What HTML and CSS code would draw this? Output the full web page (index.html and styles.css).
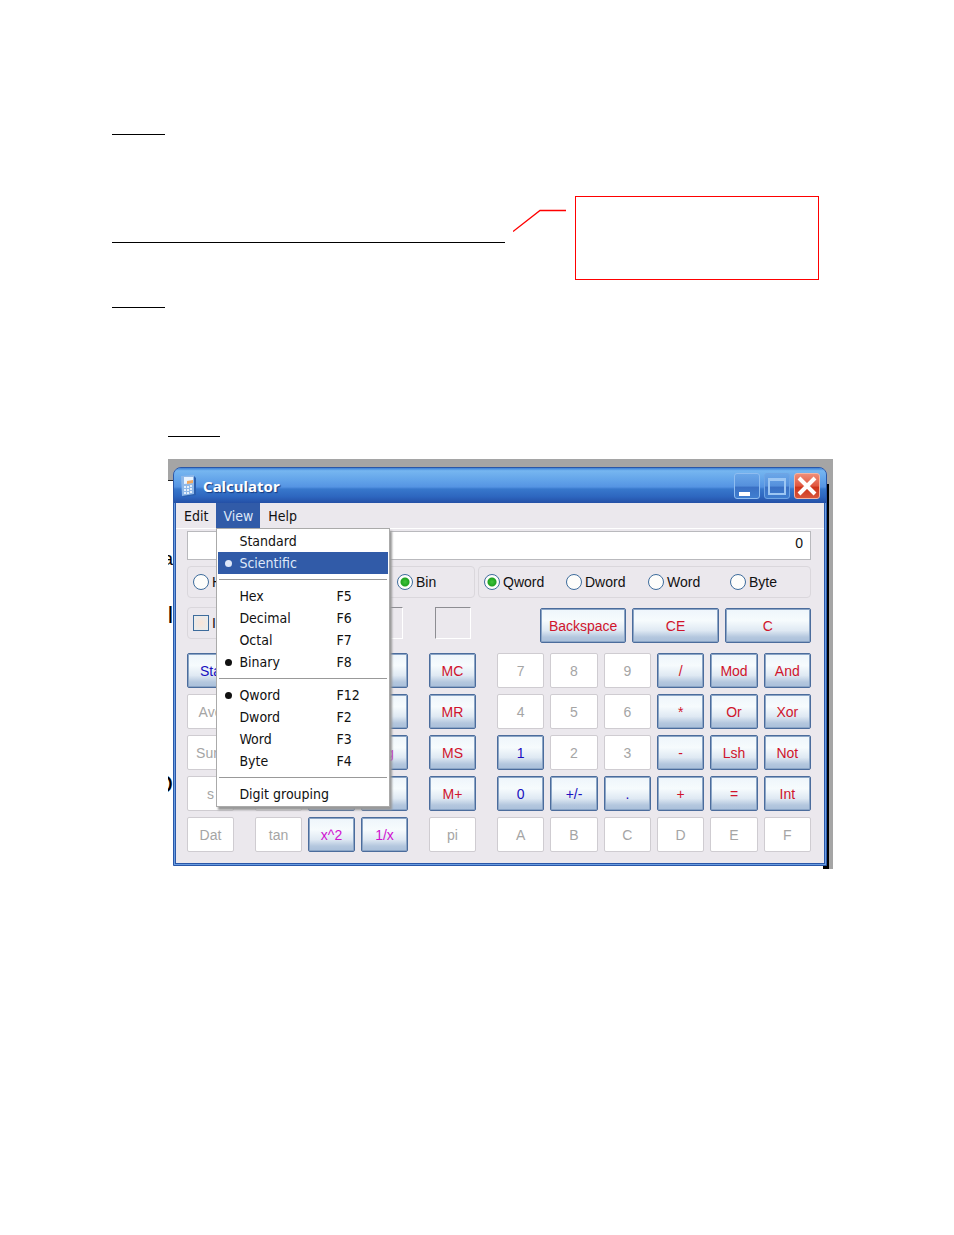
FILE: index.html
```html
<!DOCTYPE html>
<html lang="en">
<head>
<meta charset="utf-8">
<title>Calculator</title>
<meta name="viewport" content="width=device-width, initial-scale=1.0">
<link rel="stylesheet" href="styles.css">
</head>
<body>

<main class="page">
  <hr class="rule">

  <div class="note-row">
    <hr class="note-rule">
    <svg class="leader" width="54" height="24" viewBox="0 0 54 24">
      <path d="M0 22.500 L27 1.500 H53" fill="none" stroke="#f00" stroke-width="1.300"/>
    </svg>
    <div class="callout"></div>
  </div>

  <hr class="rule second">
  <hr class="rule third">

  <div class="desktop">
    <div class="behind">
      <span class="frag-a">a</span>
      <span class="frag-l">l</span>
      <span class="frag-d">D</span>
    </div>

    <div class="window">
      <div class="titlebar">
        <svg class="app-icon" width="18" height="22" viewBox="0 0 18 22">
          <path d="M1 1 H13 L15 3 V20 L3 22 L1 20Z" fill="#2b5fae"/>
          <path d="M0 1 L13 0 V19 L1 21Z" fill="#8fb8e8"/>
          <path d="M3 2 L12 2 V8 L3 9Z" fill="#e8f3ff"/>
          <path d="M6 6 L12 5 V8 L6 9Z" fill="#f0a860"/>
          <path d="M3 11h2v2H3zM6 11h2v2H6zM9 10h2v2H9zM3 14h2v2H3zM6 14h2v2H6zM9 13h2v2H9zM3 17h2v2H3zM6 17h2v2H6zM9 16h2v2H9z" fill="#e4effb"/>
        </svg>
        <span class="title">Calculator</span>
        <button class="win-btn" aria-label="Minimize">
          <svg width="26" height="26" viewBox="0 0 26 26"><path d="M5 19h11v4H5z" fill="#fff"/></svg>
        </button>
        <button class="win-btn faded" aria-label="Maximize">
          <svg width="26" height="26" viewBox="0 0 26 26"><path d="M5 6H21V21H5Z" fill="none" stroke="#9cc6f3" stroke-width="2"/><path d="M4 6.500H22" stroke="#9cc6f3" stroke-width="3"/></svg>
        </button>
        <button class="win-btn close" aria-label="Close">
          <svg width="26" height="26" viewBox="0 0 26 26"><path d="M5 5 L21 21 M21 5 L5 21" stroke="#fff" stroke-width="4"/></svg>
        </button>
      </div>

      <div class="client">
        <div class="menubar">
          <button class="menu-btn">Edit</button>
          <div class="menu-wrap">
            <button class="menu-btn open">View</button>
            <div class="menu">
              <button class="item"><span>Standard</span></button>
              <button class="item dot selected"><span>Scientific</span></button>
              <hr class="sep">
              <button class="item"><span>Hex</span><span>F5</span></button>
              <button class="item"><span>Decimal</span><span>F6</span></button>
              <button class="item"><span>Octal</span><span>F7</span></button>
              <button class="item dot"><span>Binary</span><span>F8</span></button>
              <hr class="sep">
              <button class="item dot"><span>Qword</span><span>F12</span></button>
              <button class="item"><span>Dword</span><span>F2</span></button>
              <button class="item"><span>Word</span><span>F3</span></button>
              <button class="item"><span>Byte</span><span>F4</span></button>
              <hr class="sep">
              <button class="item"><span>Digit grouping</span></button>
            </div>
          </div>
          <button class="menu-btn">Help</button>
        </div>

        <div class="content">
          <input class="display" type="text" value="0" aria-label="Display" readonly>

          <div class="options">
            <div class="group base">
              <label><input type="radio" name="base">Hex</label>
              <label><input type="radio" name="base" aria-label="Dec"></label>
              <label><input type="radio" name="base" aria-label="Oct"></label>
              <label><input type="radio" name="base" checked>Bin</label>
            </div>
            <div class="group size">
              <label><input type="radio" name="size" checked>Qword</label>
              <label><input type="radio" name="size">Dword</label>
              <label><input type="radio" name="size">Word</label>
              <label><input type="radio" name="size">Byte</label>
            </div>
          </div>

          <div class="tools">
            <div class="group flags">
              <label><input type="checkbox">Inv</label>
              <label><input type="checkbox" aria-label="Hyp"></label>
            </div>
            <div class="indicator"></div>
            <div class="indicator"></div>
            <div class="clear">
              <button class="key red">Backspace</button>
              <button class="key red">CE</button>
              <button class="key red">C</button>
            </div>
          </div>

          <div class="keypad">
            <div class="keys">
              <button class="key blue">Sta</button>
              <button class="key" disabled>Ave</button>
              <button class="key" disabled>Sum</button>
              <button class="key" disabled>s</button>
              <button class="key" disabled>Dat</button>
            </div>
            <div class="keys three">
              <button class="key" aria-label="F-E" disabled></button>
              <button class="key pink" aria-label="("></button>
              <button class="key pink" aria-label=")"></button>
              <button class="key" aria-label="dms" disabled></button>
              <button class="key pink" aria-label="Exp"></button>
              <button class="key pink" aria-label="ln"></button>
              <button class="key" aria-label="sin" disabled></button>
              <button class="key pink" aria-label="x^y"></button>
              <button class="key pink">log</button>
              <button class="key" aria-label="cos" disabled></button>
              <button class="key pink" aria-label="x^3"></button>
              <button class="key pink" aria-label="n!"></button>
              <button class="key" disabled>tan</button>
              <button class="key pink">x^2</button>
              <button class="key pink">1/x</button>
            </div>
            <div class="keys">
              <button class="key red">MC</button>
              <button class="key red">MR</button>
              <button class="key red">MS</button>
              <button class="key red">M+</button>
              <button class="key" disabled>pi</button>
            </div>
            <div class="keys six">
              <button class="key" disabled>7</button>
              <button class="key" disabled>8</button>
              <button class="key" disabled>9</button>
              <button class="key red">/</button>
              <button class="key red">Mod</button>
              <button class="key red">And</button>
              <button class="key" disabled>4</button>
              <button class="key" disabled>5</button>
              <button class="key" disabled>6</button>
              <button class="key red">*</button>
              <button class="key red">Or</button>
              <button class="key red">Xor</button>
              <button class="key blue">1</button>
              <button class="key" disabled>2</button>
              <button class="key" disabled>3</button>
              <button class="key red">-</button>
              <button class="key red">Lsh</button>
              <button class="key red">Not</button>
              <button class="key blue">0</button>
              <button class="key blue">+/-</button>
              <button class="key blue">.</button>
              <button class="key red">+</button>
              <button class="key red">=</button>
              <button class="key red">Int</button>
              <button class="key" disabled>A</button>
              <button class="key" disabled>B</button>
              <button class="key" disabled>C</button>
              <button class="key" disabled>D</button>
              <button class="key" disabled>E</button>
              <button class="key" disabled>F</button>
            </div>
          </div>
        </div>
      </div>
    </div>
  </div>
</main>

</body>
</html>
```
FILE: styles.css
```css
* {
  box-sizing: border-box;
}
body {
  margin: 0;
  background: #fff;
  color: #111;
  font-family: "Liberation Sans", Arial, sans-serif;
  font-size: 14px;
}
button, input {
  font: inherit;
  color: inherit;
  margin: 0;
}
hr {
  margin: 0;
  border: 0;
}

/* document */
.page {
  padding: 134px 121px 0 112px;
}
.rule {
  width: 53px;
  height: 1px;
  background: #000;
}
.second {
  margin-top: 27px;
}
.third {
  width: 52px;
  margin: 128px 0 22px 56px;
}
.note-row {
  display: flex;
  gap: 8px;
  margin-top: 61px;
  padding-right: 14px;
}
.note-rule {
  flex: 1;
  height: 1px;
  margin-top: 46px;
  background: #000;
}
.leader {
  margin-top: 13px;
}
.callout {
  width: 244px;
  height: 84px;
  border: 1px solid #f00;
}

/* what shows around the window */
.desktop {
  position: relative;
  margin-left: 56px;
  padding: 8px 6px 3px 5px;
  background:
    linear-gradient(#a5a5a5, #a5a5a5) right / 4px 100% no-repeat,
    linear-gradient(#a5a5a5, #a5a5a5) right top / 20px 25px no-repeat,
    linear-gradient(#a5a5a5, #a5a5a5) top / 100% 21px no-repeat,
    linear-gradient(#222, #222) 0 21px / 100% 1px no-repeat,
    linear-gradient(90deg, transparent calc(100% - 10px), #000 0) 0 25px no-repeat,
    #fff;
}
.behind {
  position: absolute;
  left: 0;
  top: 22px;
  bottom: 0;
  width: 5px;
  overflow: hidden;
  color: #000;
}
.behind span {
  display: flex;
  justify-content: flex-end;
}
.frag-a {
  padding-top: 68px;
  font-size: 18px;
  line-height: 20px;
}
.frag-l {
  padding-top: 32px;
  font-size: 24px;
  line-height: 28px;
}
.frag-d {
  padding-top: 141px;
  font-size: 26px;
  line-height: 28px;
}

/* window */
.window {
  position: relative;
  padding: 0 1px 1px;
  border: 1px solid #2a57a8;
  border-radius: 8px 8px 0 0;
  background: #6a9ee2;
}
.titlebar {
  display: flex;
  align-items: center;
  gap: 4px;
  height: 35px;
  margin: 0 -1px;
  padding: 0 6px 0 7px;
  border-radius: 7px 7px 0 0;
  background: linear-gradient(#3f82d6 0, #76b6f0 8%, #62a3e9 35%, #5594e3 54%, #3878cc 60%, #2d66bf 82%, #2450a6 100%);
}
.title {
  flex: 1;
  color: #fff;
  font: bold 15px "Noto Sans", sans-serif;
  text-shadow: 1px 1px 1px #143a80;
}
.win-btn {
  width: 26px;
  height: 26px;
  padding: 0;
  border: 1px solid #8fbdf0;
  border-radius: 3px;
  background: linear-gradient(#6aa6e8, #5590dc 50%, #3a70c4 55%, #3f7ed0);
}
.win-btn svg {
  display: block;
  margin: -1px;
}
.faded {
  border-color: #6fa5e4;
}
.close {
  border-color: #f3b5a4;
  background: linear-gradient(#ef8d78, #e0573f 50%, #cd3319 55%, #d9563c);
}
.client {
  border: 1px solid #2a57a8;
  border-top: 0;
  background: #ebe8ed;
}

/* menus */
.menubar {
  display: flex;
  gap: 1px;
  height: 26px;
  padding-left: 1px;
  border-bottom: 1px solid #fff;
  font-family: "DejaVu Sans Condensed", "DejaVu Sans", sans-serif;
}
.menu-wrap {
  position: relative;
}
.menu-btn {
  height: 25px;
  padding: 0 7px;
  border: 0;
  background: none;
}
.open {
  background: #315ba8;
  color: #dfe8f8;
}
.menu {
  position: absolute;
  left: 0;
  top: 25px;
  z-index: 1;
  width: 174px;
  padding: 1px;
  border: 1px solid #aaa;
  background: #fff;
  box-shadow: 2px 3px 2px #999;
}
.item {
  position: relative;
  display: grid;
  grid-template-columns: 97px 1fr;
  align-items: center;
  width: 100%;
  height: 22px;
  padding: 0 0 0 21px;
  border: 0;
  background: none;
  text-align: left;
}
.dot::before {
  content: "";
  position: absolute;
  left: 7px;
  top: 8px;
  width: 7px;
  height: 7px;
  border-radius: 50%;
  background: currentColor;
}
.selected {
  background: #315ba8;
  color: #dfe8f8;
}
.sep {
  height: 1px;
  margin: 5px 1px;
  background: #999;
}

/* calculator face */
.content {
  padding: 2px 13px 11px 11px;
}
.display {
  display: block;
  width: 100%;
  height: 29px;
  padding: 0 7px 6px;
  border: 1px solid #b9b9bd;
  background: #fff;
  text-align: right;
}
.options {
  display: grid;
  grid-template-columns: 288fr 333fr;
  gap: 3px;
  margin-top: 6px;
}
.group {
  display: grid;
  align-items: center;
  height: 32px;
  padding-left: 5px;
  border: 1px solid #dad7dc;
  border-radius: 4px;
}
.base {
  grid-template-columns: repeat(3, 68px) 1fr;
}
.size {
  grid-template-columns: repeat(3, 82px) 1fr;
}
.group label {
  display: flex;
  align-items: center;
  gap: 3px;
}
.group input {
  appearance: none;
  flex: none;
  width: 16px;
  height: 16px;
  border: 1px solid #3d6c9c;
  background: #fdfdfb;
}
.group input[type="radio"] {
  border-radius: 50%;
}
.group input[type="checkbox"] {
  background: radial-gradient(#f8e4d8, #e6edf0);
}
.group input[type="radio"]:checked {
  background: radial-gradient(circle, #3fc43a 0, #1fa322 4px, #fdfdfb 5px);
}
.tools {
  display: flex;
  margin-top: 9px;
}
.flags {
  width: 158px;
  margin-right: 22px;
  grid-template-columns: 68px 68px;
}
.indicator {
  width: 36px;
  height: 32px;
  margin-right: 32px;
  border: 1px solid;
  border-color: #8d8d92 #fff #fff #8d8d92;
}
.clear {
  flex: 1;
  display: grid;
  grid-template-columns: repeat(3, 1fr);
  gap: 6px;
  padding: 1px 0 0 37px;
}
.keypad {
  display: grid;
  grid-template-columns: 47fr 153fr 47fr 314fr;
  gap: 21px;
  margin-top: 10px;
}
.keys {
  display: grid;
  grid-auto-rows: 35px;
  gap: 6px;
}
.three {
  grid-template-columns: repeat(3, 1fr);
}
.six {
  grid-template-columns: repeat(6, 1fr);
}
.key {
  min-width: 0;
  height: 35px;
  padding: 0;
  border: 1px solid #4b6c9c;
  border-radius: 2px;
  background: linear-gradient(#eef5fb, #f6fbfd 35%, #dfe9f3 65%, #b4c7de 85%, #a9bfda);
  box-shadow: inset 0 0 0 1px #8ba5c6;
}
.key:disabled {
  border-color: #cfccd1;
  background: #fff;
  box-shadow: none;
  color: #a5a5a5;
}
.red {
  color: #d0142c;
}
.blue {
  color: #1a10c0;
}
.pink {
  color: #d010d0;
}
```
